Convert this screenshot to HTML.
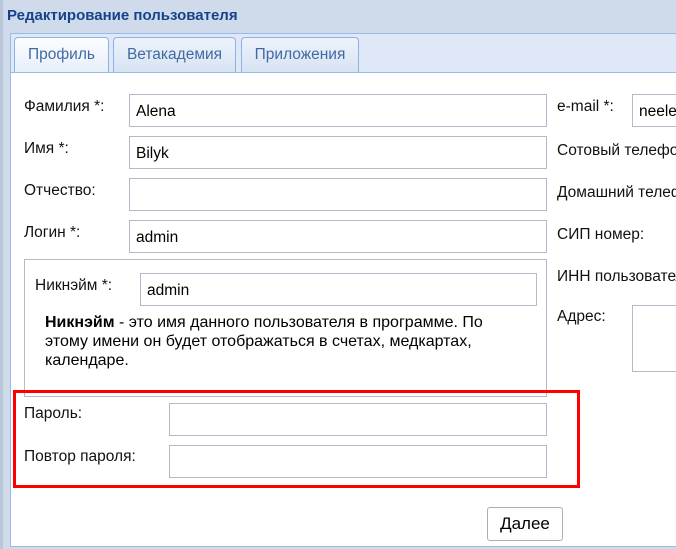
<!DOCTYPE html>
<html><head><meta charset="utf-8"><style>
*{box-sizing:border-box;margin:0;padding:0}
body{width:676px;height:549px;overflow:hidden;background:#cfdbea;font-family:"Liberation Sans",Arial,sans-serif;position:relative;color:#000}
.a{position:absolute}
.title{left:7px;top:7px;font-weight:bold;font-size:15px;color:#15428b}
.strip{left:10px;top:33px;width:666px;height:42px;background:#dfe8f6;border-left:1px solid #99bbe8;border-top:1px solid #99bbe8}
.tab{top:37px;height:35px;border:1px solid #8db2e3;border-bottom:none;border-radius:4px 4px 0 0;background:linear-gradient(#eef3fa,#d7e3f3);font-size:15.5px;color:#416aa3;text-align:center;line-height:33px}
.tab.on{background:linear-gradient(#fbfdff,#e6eef9);height:37px}
.panel{left:10px;top:72px;width:666px;height:475px;background:#fff;border:1px solid #99bbe8;border-right:none}
.lbl{font-size:15.5px;color:#111;white-space:nowrap}
.in{border:1px solid #b5b8c8;background:#fff;height:33px;font-size:15.5px;padding:8px 6px 0}
.fs{left:24px;top:259px;width:523px;height:138px;border:1px solid #b5b8c8}
.red{left:13px;top:390px;width:567px;height:98px;border:3px solid #f00}
.btn{left:487px;top:507px;width:76px;height:34px;border:1px solid #adadad;border-radius:3px;background:#fff;font-size:17px;text-align:center;line-height:32px}
</style></head><body>
<div class="a" style="left:0;top:0;width:3px;height:549px;background:#b8c7d9"></div>
<div class="a title">Редактирование пользователя</div>
<div class="a strip"></div>
<div class="a tab on" style="left:14px;width:95px">Профиль</div>
<div class="a tab" style="left:113px;width:123px">Ветакадемия</div>
<div class="a tab" style="left:241px;width:118px">Приложения</div>
<div class="a panel"></div>

<div class="a lbl" style="left:24px;top:98px">Фамилия *:</div>
<div class="a in" style="left:129px;top:94px;width:418px">Alena</div>
<div class="a lbl" style="left:24px;top:140px">Имя *:</div>
<div class="a in" style="left:129px;top:136px;width:418px">Bilyk</div>
<div class="a lbl" style="left:24px;top:182px">Отчество:</div>
<div class="a in" style="left:129px;top:178px;width:418px"></div>
<div class="a lbl" style="left:24px;top:224px">Логин *:</div>
<div class="a in" style="left:129px;top:220px;width:418px">admin</div>

<div class="a fs"></div>
<div class="a lbl" style="left:35px;top:277px">Никнэйм *:</div>
<div class="a in" style="left:140px;top:273px;width:397px">admin</div>
<div class="a" style="left:45px;top:313px;font-size:16px;line-height:19px;width:455px">
<b>Никнэйм</b> - это имя данного пользователя в программе. По этому имени он будет отображаться в счетах, медкартах, календаре.</div>

<div class="a lbl" style="left:24px;top:405px">Пароль:</div>
<div class="a in" style="left:169px;top:403px;width:378px"></div>
<div class="a lbl" style="left:24px;top:448px">Повтор пароля:</div>
<div class="a in" style="left:169px;top:445px;width:378px"></div>
<div class="a red"></div>

<div class="a lbl" style="left:557px;top:98px">e-mail *:</div>
<div class="a in" style="left:632px;top:94px;width:60px">neelena</div>
<div class="a lbl" style="left:557px;top:142px">Сотовый телефон:</div>
<div class="a lbl" style="left:557px;top:184px">Домашний телефон:</div>
<div class="a lbl" style="left:557px;top:226px">СИП номер:</div>
<div class="a lbl" style="left:557px;top:268px">ИНН пользователя:</div>
<div class="a lbl" style="left:557px;top:308px">Адрес:</div>
<div class="a in" style="left:632px;top:305px;width:60px;height:67px"></div>

<div class="a btn">Далее</div>
</body></html>
